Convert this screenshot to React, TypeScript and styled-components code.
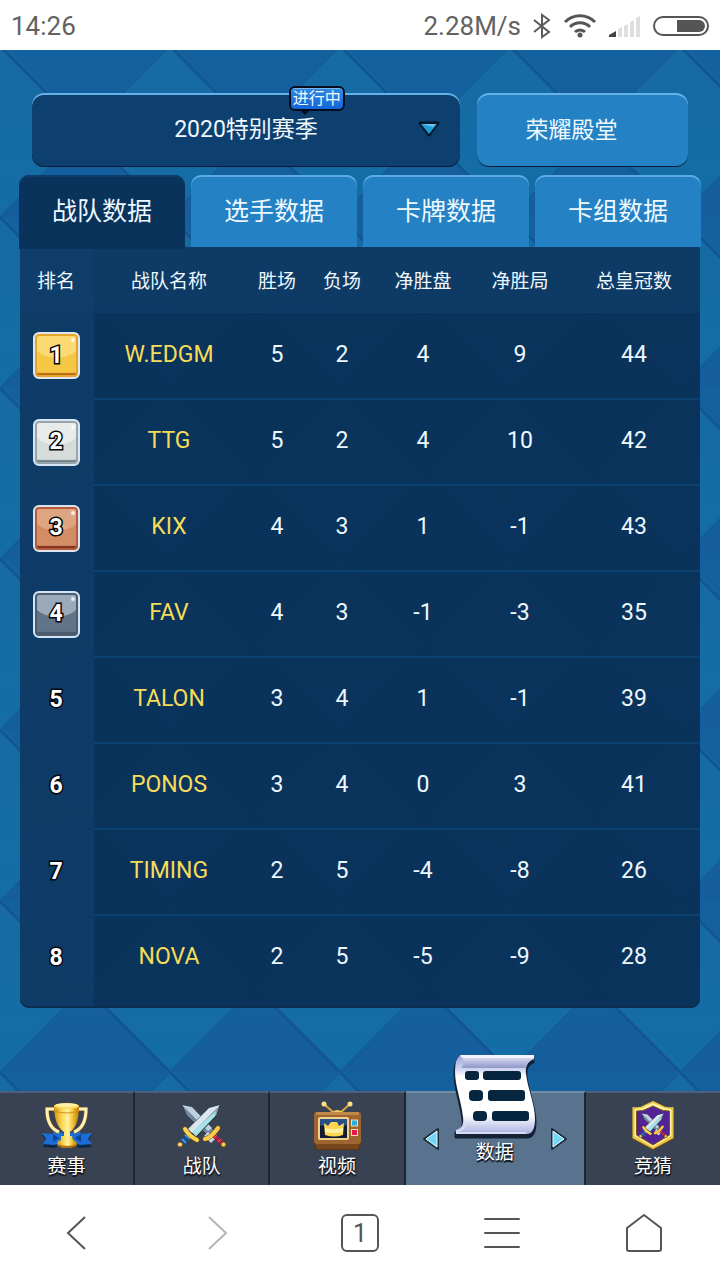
import React from 'react';
import styled, { createGlobalStyle, css } from 'styled-components';

const GlobalStyle = createGlobalStyle`
  *, *::before, *::after { box-sizing: border-box; }
  body {
    margin: 0;
    font-family: Roboto, "Noto Sans CJK SC", sans-serif;
    background: #fff;
  }
  button, select {
    font: inherit;
    color: inherit;
    border: 0;
    padding: 0;
    background: none;
    cursor: pointer;
  }
`;

const Page = styled.div`
  min-height: 100vh;
  display: flex;
  flex-direction: column;
`;

const StatusBar = styled.header`
  height: 50px;
  display: flex;
  align-items: center;
  justify-content: space-between;
  padding: 1px 11px 0;
  font-size: 26px;
  line-height: 32px;
  color: #626262;
  background: #fff;
`;

const StatusIcons = styled.div`
  display: flex;
  align-items: center;
  gap: 12px;
`;

const Main = styled.main`
  position: relative;
  isolation: isolate;
  flex: 1;
  padding: 43px 19px 83px;
  color: #eef8ff;
`;

const Backdrop = styled.svg`
  position: absolute;
  inset: 0;
  width: 100%;
  height: 100%;
  z-index: -1;
`;

const TopRow = styled.div`
  display: grid;
  grid-template-columns: minmax(0, 428fr) minmax(0, 211fr);
  gap: 17px;
  padding: 0 13px;
  margin-bottom: 8px;
`;

const box = css`
  height: 74px;
  border-radius: 12px;
  font-size: 23px;
  box-shadow: inset 0 2px 0 #66b1ea, inset 0 -1px 0 #071b33;
`;

const SeasonField = styled.div`
  position: relative;
`;

const SeasonSelect = styled.select`
  ${box}
  display: block;
  width: 100%;
  appearance: none;
  text-align: center;
  text-align-last: center;
  background: #0e406f;
  padding-bottom: 2px;
`;

const SelectArrow = styled.svg`
  position: absolute;
  right: 19px;
  top: 27px;
  pointer-events: none;
`;

const LiveBadge = styled.span`
  position: absolute;
  left: 60%;
  top: -7px;
  width: 56px;
  height: 25px;
  border: 2px solid #050d1c;
  border-radius: 6px;
  background: linear-gradient(#3389e0, #1265da);
  box-shadow: inset 0 1px 0 #75b8f3;
  font-size: 16px;
  line-height: 21px;
  text-align: center;
  white-space: nowrap;
  &::after {
    content: '';
    position: absolute;
    left: 9px;
    bottom: -6px;
    border: 5px solid transparent;
    border-bottom: 0;
    border-top-color: #050d1c;
  }
`;

const HallButton = styled.button`
  ${box}
  padding: 0 22px 4px 0;
  background: #2381c4;
`;

const Tabs = styled.div`
  display: flex;
  gap: 6px;
  height: 72px;
`;

const Tab = styled.button<{ $active?: boolean }>`
  position: relative;
  z-index: 1;
  flex: 1;
  height: ${(p) => (p.$active ? 74 : 72)}px;
  padding-bottom: ${(p) => (p.$active ? 6 : 4)}px;
  border-radius: 10px 10px 0 0;
  font-size: 25px;
  background: ${(p) => (p.$active ? '#09335b' : '#2381c4')};
  box-shadow: inset 0 2px 0 ${(p) => (p.$active ? '#0d3d69' : '#5cabe6')};
`;

const Panel = styled.section`
  margin: 0 1px;
  padding-bottom: 6px;
  border-radius: 0 0 9px 9px;
  overflow: hidden;
  background: linear-gradient(90deg, rgba(13, 56, 98, 0.92) 74px, rgba(9, 47, 86, 0.92) 74px);
  box-shadow: inset 0 -2px 0 #0a2e50;
`;

const Table = styled.table`
  width: 100%;
  table-layout: fixed;
  border-collapse: collapse;
`;

const Col = styled.col<{ $w?: number }>`
  width: ${(p) => (p.$w ? `${p.$w}px` : 'auto')};
`;

const HeadCell = styled.th`
  height: 66px;
  padding: 4px 0 0;
  font-size: 19px;
  font-weight: 400;
  line-height: 24px;
  white-space: nowrap;
  background: rgba(17, 64, 109, 0.6);
  &:first-child { padding-right: 2px; }
`;

const Cell = styled.td`
  height: 86px;
  padding: 0 0 2px;
  border-bottom: 2px solid #0b4170;
  font-size: 23px;
  line-height: 28px;
  text-align: center;
  tr:last-child & { border-bottom-color: transparent; }
`;

const RankCell = styled(Cell)`
  padding: 0 2px 0 0;
  border-bottom-color: transparent;
`;

const TeamCell = styled(Cell)`
  color: #f6dc59;
`;

type Medal = { border: string; rim: string; top: string; bottom: string; low: string };

const RankBadge = styled.span<{ $medal?: Medal }>`
  display: inline-flex;
  align-items: center;
  justify-content: center;
  width: 47px;
  height: 47px;
  vertical-align: middle;
  border-radius: 6px;
  font-size: 23px;
  font-weight: 700;
  color: #fff;
  -webkit-text-stroke: 3px #05080c;
  paint-order: stroke fill;
  ${(p) =>
    p.$medal &&
    css`
      border: 2px solid ${p.$medal.border};
      background:
        radial-gradient(circle at 38px 6px, rgba(255, 255, 255, 0.8) 1px, transparent 3px),
        radial-gradient(ellipse 24px 16px at 50% 8px, ${p.$medal.top} 96%, transparent),
        ${p.$medal.bottom};
      box-shadow: inset 0 0 0 2px ${p.$medal.rim}, inset 0 -4px 1px ${p.$medal.low};
    `}
`;

const GameNav = styled.nav`
  position: relative;
  display: grid;
  grid-template-columns: repeat(3, minmax(0, 135fr)) minmax(0, 180fr) minmax(0, 134fr);
  height: 94px;
  background: #384253;
`;

const NavItem = styled.button<{ $active?: boolean }>`
  height: 94px;
  display: flex;
  align-items: center;
  justify-content: ${(p) => (p.$active ? 'space-between' : 'center')};
  padding: 0 16px;
  border-top: 2px solid ${(p) => (p.$active ? '#728ba6' : '#4c6177')};
  border-right: 2px solid #1c2532;
  background: ${(p) => (p.$active ? '#59728e' : '#384253')};
  &:last-child { border-right: 0; }
`;

const NavBody = styled.span<{ $active?: boolean }>`
  display: flex;
  flex-direction: column;
  align-items: center;
  justify-content: flex-end;
  gap: ${(p) => (p.$active ? 0 : 4)}px;
  height: 92px;
  padding-bottom: ${(p) => (p.$active ? 20 : 6)}px;
  font-size: 19px;
  line-height: 24px;
  color: #fff;
  text-shadow: 1px 1px 1px #10151d, 0 2px 1px #10151d;
  svg { flex: none; }
`;

const BrowserBar = styled.nav`
  display: flex;
  height: 95px;
  align-items: center;
  justify-content: space-between;
  padding: 0 54px;
  background: #fff;
`;

const BrowserButton = styled.button<{ $muted?: boolean }>`
  width: 44px;
  height: 44px;
  display: flex;
  align-items: center;
  justify-content: center;
  color: ${(p) => (p.$muted ? '#b4b4b4' : '#555')};
`;

const TabCount = styled.span`
  width: 38px;
  height: 38px;
  border: 2px solid #555;
  border-radius: 6px;
  font-size: 25px;
  line-height: 36px;
  text-align: center;
`;

const DiamondBackdrop = () => (
  <Backdrop aria-hidden="true">
    <defs>
      <linearGradient id="lightDiamond" x1="0" y1="0" x2="0" y2="1">
        <stop offset="0" stopColor="#176aa3" />
        <stop offset="1" stopColor="#146da7" />
      </linearGradient>
      <linearGradient id="darkDiamond" x1="0" y1="0" x2="0" y2="1">
        <stop offset="0" stopColor="#14619f" />
        <stop offset="1" stopColor="#155e9e" />
      </linearGradient>
      <pattern id="diamonds" width="170" height="171" patternUnits="userSpaceOnUse" y="-4">
        <rect width="170" height="171" fill="url(#darkDiamond)" />
        <path d="M0 0 85 85.500 0 171ZM170 0 85 85.500 170 171Z" fill="url(#lightDiamond)" />
        <path d="M0 0 170 171" stroke="#10518f" strokeWidth="3" opacity=".75" />
        <path d="M170 0 0 171" stroke="#115694" strokeWidth="2" opacity=".5" />
        <path d="M3 0 170 168" stroke="#1f76b0" strokeWidth="1" opacity=".35" />
      </pattern>
    </defs>
    <rect width="100%" height="100%" fill="url(#diamonds)" />
  </Backdrop>
);

const Bluetooth = () => (
  <svg width="18" height="26" viewBox="0 0 18 26" fill="none" stroke="#5c5c5c" strokeWidth="2">
    <path d="M1 7 16 19 9 24V2l7 5L1 19" />
  </svg>
);

const Wifi = () => (
  <svg width="34" height="24" viewBox="0 0 34 24" fill="none" stroke="#555" strokeWidth="3">
    <path d="M2 8a21 21 0 0 1 30 0M7 13a14 14 0 0 1 20 0M12 18a7 7 0 0 1 10 0" />
    <circle cx="17" cy="21" r="2.500" fill="#555" stroke="none" />
  </svg>
);

const Signal = () => (
  <svg width="32" height="22" viewBox="0 0 32 22">
    <path d="M0 22v-2l7-4v6Z" fill="#444" />
    <path d="M9 22v-8l4-2v10ZM15 22V11l4-2v13ZM21 22V7l4-2v17ZM27 22V3l4-2v21Z" fill="#dedede" />
  </svg>
);

const Battery = () => (
  <svg width="56" height="20" viewBox="0 0 56 20">
    <rect x="1" y="1" width="54" height="18" rx="9" fill="#fff" stroke="#555" strokeWidth="2" />
    <path d="M24 4h22a6 6 0 0 1 0 12H24Z" fill="#555" />
  </svg>
);

const Trophy = () => (
  <svg width="52" height="50" viewBox="40 1100 52 50" aria-hidden="true">
    <defs>
      <linearGradient id="gold">
        <stop offset="0" stopColor="#d08d13" />
        <stop offset=".3" stopColor="#fbd44f" />
        <stop offset=".55" stopColor="#fff3a0" />
        <stop offset=".75" stopColor="#f5c233" />
        <stop offset="1" stopColor="#b9760d" />
      </linearGradient>
    </defs>
    <path d="M41 1133l11 1 1-5 13 6 12-6 2 5 11-1-4 6 4 6-12 1-13-4-13 4-11-1 3-6Z" fill="#0f2747" transform="translate(0 1)" />
    <path d="M41 1132l11 1 1-5 13 6 12-6 2 5 11-1-4 6 4 5-12 1-13-4-13 4-11-1 3-5Z" fill="#1c6ed6" />
    <path d="M52 1133v8l6-4ZM80 1133v8l-6-4Z" fill="#0c469b" />
    <path d="M54 1108h-8c0 13 4 20 12 23M77 1108h8c0 13-4 20-12 23" fill="none" stroke="#8f6316" strokeWidth="4" />
    <path d="M54 1108h-8c0 13 4 20 12 23M77 1108h8c0 13-4 20-12 23" fill="none" stroke="#fff0b5" strokeWidth="3" />
    <path d="M53 1104c0 13 3 22 10 27v7h6v-7c7-5 9-14 9-27Z" fill="url(#gold)" />
    <ellipse cx="65.500" cy="1105" rx="12.500" ry="3" fill="#fbdc67" />
    <ellipse cx="65.500" cy="1104" rx="11" ry="1.800" fill="#fff2a5" />
    <path d="M53 1110q13 4 25 0" stroke="#ce9120" fill="none" />
    <path d="M60 1135h11l1 4q4 1 4 4c0 5-20 5-20 0q0-3 4-4Z" fill="url(#gold)" />
    <path d="M56 1143q10 4 20 0v2q-10 4-20 0Z" fill="#a96b11" />
  </svg>
);

const SwordShapes = () => (
  <g>
    <path d="M182 1104l10 2 22 23-6 6-22-21Z" fill="#71859c" stroke="#26323f" strokeWidth="1" />
    <path d="M182 1104l10 2 20 21-4 3Z" fill="#bfd0df" />
    <path d="M208 1131l7 7-4 4-7-7Z" fill="#c7d7e4" />
    <path d="M213 1134l10 9" stroke="#b31b40" strokeWidth="4" />
    <path d="M214 1137l3-3M218 1141l3-3" stroke="#f25978" />
    <path d="M205 1138q6-1 13-11" stroke="#7c4e0c" strokeWidth="5" fill="none" strokeLinecap="round" />
    <path d="M205 1138q6-1 13-11" stroke="#f9cb47" strokeWidth="4" fill="none" strokeLinecap="round" />
    <circle cx="223.500" cy="1143.500" r="2.500" fill="#f4cb5b" stroke="#7c4e0c" />
    <path d="M220 1104l-11 3-21 21 8 8 21-22Z" fill="#87a0b1" stroke="#26323f" strokeWidth="1" />
    <path d="M220 1104l-11 3-21 21 4 4Z" fill="#d9e6ed" />
    <path d="M216 1110l-24 21 4 4 19-20Z" fill="#a5e3e6" />
    <path d="M190 1133l-9 10" stroke="#164e9b" strokeWidth="5" />
    <path d="M185 1134l5 4M182 1138l4 4" stroke="#49a9eb" strokeWidth="1.500" />
    <path d="M185 1128q4 7 12 11" stroke="#7c4e0c" strokeWidth="5" fill="none" strokeLinecap="round" />
    <path d="M185 1128q4 7 12 11" stroke="#fbd34e" strokeWidth="4" fill="none" strokeLinecap="round" />
    <circle cx="180" cy="1143.500" r="2.500" fill="#f9d877" stroke="#7c4e0c" />
  </g>
);

const Swords = () => (
  <svg width="52" height="50" viewBox="176 1100 52 50" aria-hidden="true">
    <SwordShapes />
  </svg>
);

const Television = () => (
  <svg width="52" height="50" viewBox="311 1101 52 50" aria-hidden="true">
    <path d="M324 1104l10 9M350 1104l-10 9" stroke="#d9a93a" strokeWidth="2" />
    <circle cx="324" cy="1104" r="2.500" fill="#ffe181" />
    <circle cx="350" cy="1104" r="2.500" fill="#ffe181" />
    <path d="M331 1113q6-6 13 0Z" fill="#f5c958" />
    <path d="M317 1112h41q3 0 3 3v29l-2 6h-43l-2-6v-29q0-3 3-3Z" fill="#5a3415" />
    <rect x="314" y="1112" width="47" height="32" rx="3" fill="#9c6532" />
    <rect x="316" y="1112" width="43" height="3" rx="1" fill="#c18848" />
    <path d="M315 1144h45l-2 5h-41Z" fill="#774619" />
    <rect x="319" y="1118" width="29" height="21" rx="1" fill="#111c30" stroke="#f2d28e" strokeWidth="2" />
    <path d="M320 1119h27v6q-14 5-27 0Z" fill="#294f83" />
    <path d="M324 1123l4 3 3-4h6l2 4 5-3-1 12q-9 3-18 0Z" fill="#ffd64f" />
    <path d="M325 1128q9 2 18 0v4q-9 2-18 0Z" fill="#fff09f" />
    <rect x="351.500" y="1120" width="6" height="6" fill="#23aee8" stroke="#f6dcaa" />
    <rect x="351.500" y="1129.500" width="6" height="6" fill="#ef1649" stroke="#f6dcaa" />
  </svg>
);

const Scroll = () => (
  <svg width="88" height="88" viewBox="453 1052 88 88" aria-hidden="true">
    <defs>
      <linearGradient id="paper" x1="0" y1="0" x2="0" y2="1">
        <stop offset="0" stopColor="#9da5d6" />
        <stop offset=".18" stopColor="#cfd4f1" />
        <stop offset=".27" stopColor="#ffffff" />
        <stop offset=".76" stopColor="#ffffff" />
        <stop offset="1" stopColor="#a8b0df" />
      </linearGradient>
      <linearGradient id="curl" x1="0" y1="0" x2="0" y2="1">
        <stop offset="0" stopColor="#e6e9f8" />
        <stop offset="1" stopColor="#8f98c9" />
      </linearGradient>
    </defs>
    <path d="M463 1055h72v4c-6 2-8 7-7 15 2 16 9 30 9 45 0 10-3 15-8 15h-71v-4c6-2 8-6 7-13-2-18-8-30-8-46q0-13 6-16Z" fill="#142235" stroke="#142235" strokeWidth="3" strokeLinejoin="round" transform="translate(0 2)" />
    <path d="M463 1054h73v4c-6 2-9 7-8 15 2 16 9 30 9 45 0 10-3 15-8 15h-71v-4c6-2 8-6 7-13-2-18-8-30-8-46q0-13 6-16Z" fill="url(#paper)" />
    <path d="M463 1054h73v4c-4 1-7 4-8 9h-64q3-8-1-13Z" fill="url(#curl)" />
    <path d="M462 1054h74v3h-72Z" fill="#f3f4fd" />
    <path d="M458 1130q6 0 9-5M458 1132h70" stroke="#d5daf5" strokeWidth="2" fill="none" />
    <g fill="#06263f">
      <rect x="467" y="1070" width="14" height="9" rx="3" />
      <rect x="485" y="1070" width="38" height="9" rx="3" />
      <rect x="471" y="1089" width="14" height="11" rx="4" />
      <rect x="490" y="1089" width="37" height="11" rx="3" />
      <rect x="475" y="1110" width="14" height="10" rx="4" />
      <rect x="494" y="1110" width="37" height="10" rx="3" />
    </g>
  </svg>
);

const Shield = () => (
  <svg width="46" height="50" viewBox="630.500 1102 46 50" aria-hidden="true">
    <path d="M633 1109q8 1 12-3l8.500-4 8.500 4q4 4 12 3v31l-20.500 11-20.500-11Z" fill="#7c570e" />
    <path d="M633 1108q8 1 12-2l8.500-4 8.500 4q4 3 12 2v31l-20.500 11-20.500-11Z" fill="#edc543" />
    <path d="M635 1110q8 0 11-3l7.500-3 7.500 3q3 3 11 3v27l-18.500 11-18.500-11Z" fill="#fff2a0" />
    <path d="M637 1112q7 0 10-2l6.500-3 6.500 3q3 2 10 2v24l-16.500 10-16.500-10Z" fill="#532396" stroke="#7d5418" />
    <g transform="translate(653.500 1126) scale(.58) translate(-201.500 -1124)">
      <SwordShapes />
    </g>
  </svg>
);

const PageArrow = ({ back }: { back?: boolean }) => (
  <svg width="18" height="24" viewBox="0 0 18 24" aria-hidden="true">
    <path
      d={back ? 'M16 2v20L2 12Z' : 'M2 2v20l14-10Z'}
      fill="#6ccdf2"
      stroke="#202b3a"
      strokeWidth="2"
      strokeLinejoin="round"
    />
    <path d={back ? 'M15 4v16L4 12Z' : 'M3 4v16l11-8Z'} fill="#73d6f5" stroke="#e2faff" strokeWidth="1" />
  </svg>
);

const medals: Record<number, Medal> = {
  1: { border: '#e0e6ee', rim: '#e5a52b', top: '#fcd973', bottom: '#f6c645', low: '#b96813' },
  2: { border: '#d7e5f3', rim: '#98a5ad', top: '#e7ebea', bottom: '#d6dcd9', low: '#74828c' },
  3: { border: '#dce3ee', rim: '#b65a3c', top: '#dea583', bottom: '#d38d65', low: '#7d2f1d' },
  4: { border: '#d5e5f5', rim: '#4c5d70', top: '#9aaabb', bottom: '#617488', low: '#47586a' },
};

const columns = ['排名', '战队名称', '胜场', '负场', '净胜盘', '净胜局', '总皇冠数'];

const teams: [string, ...number[]][] = [
  ['W.EDGM', 5, 2, 4, 9, 44],
  ['TTG', 5, 2, 4, 10, 42],
  ['KIX', 4, 3, 1, -1, 43],
  ['FAV', 4, 3, -1, -3, 35],
  ['TALON', 3, 4, 1, -1, 39],
  ['PONOS', 3, 4, 0, 3, 41],
  ['TIMING', 2, 5, -4, -8, 26],
  ['NOVA', 2, 5, -5, -9, 28],
];

const navItems = [
  { label: '赛事', Icon: Trophy },
  { label: '战队', Icon: Swords },
  { label: '视频', Icon: Television },
  { label: '数据', Icon: Scroll, active: true },
  { label: '竞猜', Icon: Shield },
];

export default function App() {
  return (
    <Page>
      <GlobalStyle />
      <StatusBar>
        <span>14:26</span>
        <StatusIcons>
          <span>2.28M/s</span>
          <Bluetooth />
          <Wifi />
          <Signal />
          <Battery />
        </StatusIcons>
      </StatusBar>

      <Main>
        <DiamondBackdrop />
        <TopRow>
          <SeasonField>
            <SeasonSelect aria-label="赛季" defaultValue="2020">
              <option value="2020">2020特别赛季</option>
            </SeasonSelect>
            <SelectArrow width="24" height="20" viewBox="0 0 24 20" aria-hidden="true">
              <path d="M3 3h18l-9 12Z" fill="#1d9bd1" stroke="#06182b" strokeWidth="3" strokeLinejoin="round" />
              <path d="M4 4h16l-8 10Z" fill="#1f9fd4" />
              <path d="M5 4h14l-3 3Z" fill="#6cc4ea" />
            </SelectArrow>
            <LiveBadge>进行中</LiveBadge>
          </SeasonField>
          <HallButton type="button">荣耀殿堂</HallButton>
        </TopRow>

        <Tabs role="tablist">
          {['战队数据', '选手数据', '卡牌数据', '卡组数据'].map((label, i) => (
            <Tab key={label} type="button" role="tab" aria-selected={i === 0} $active={i === 0}>
              {label}
            </Tab>
          ))}
        </Tabs>

        <Panel>
          <Table>
            <colgroup>
              <Col $w={74} />
              <Col />
              <Col $w={66} />
              <Col $w={64} />
              <Col $w={98} />
              <Col $w={96} />
              <Col $w={132} />
            </colgroup>
            <thead>
              <tr>
                {columns.map((name) => (
                  <HeadCell key={name} scope="col">{name}</HeadCell>
                ))}
              </tr>
            </thead>
            <tbody>
              {teams.map(([team, ...stats], i) => (
                <tr key={team}>
                  <RankCell>
                    <RankBadge $medal={medals[i + 1]}>{i + 1}</RankBadge>
                  </RankCell>
                  <TeamCell>{team}</TeamCell>
                  {stats.map((value, j) => (
                    <Cell key={j}>{value}</Cell>
                  ))}
                </tr>
              ))}
            </tbody>
          </Table>
        </Panel>
      </Main>

      <GameNav>
        {navItems.map(({ label, Icon, active }) => (
          <NavItem key={label} type="button" $active={active}>
            {active && <PageArrow back />}
            <NavBody $active={active}>
              <Icon />
              {label}
            </NavBody>
            {active && <PageArrow />}
          </NavItem>
        ))}
      </GameNav>

      <BrowserBar>
        <BrowserButton type="button" aria-label="后退">
          <svg width="22" height="36" viewBox="0 0 22 36" fill="none" stroke="currentColor" strokeWidth="2">
            <path d="M20 2 3 18l17 16" />
          </svg>
        </BrowserButton>
        <BrowserButton type="button" aria-label="前进" $muted>
          <svg width="22" height="36" viewBox="0 0 22 36" fill="none" stroke="currentColor" strokeWidth="2">
            <path d="m2 2 17 16L2 34" />
          </svg>
        </BrowserButton>
        <BrowserButton type="button" aria-label="标签页">
          <TabCount>1</TabCount>
        </BrowserButton>
        <BrowserButton type="button" aria-label="菜单">
          <svg width="38" height="32" viewBox="0 0 38 32" stroke="currentColor" strokeWidth="2" strokeLinecap="round">
            <path d="M2 2h34M2 16h34M2 30h34" />
          </svg>
        </BrowserButton>
        <BrowserButton type="button" aria-label="主页">
          <svg width="38" height="40" viewBox="0 0 38 40" fill="none" stroke="currentColor" strokeWidth="2" strokeLinejoin="round">
            <path d="M2 15 19 2l17 13v21q0 2-2 2H4q-2 0-2-2Z" />
          </svg>
        </BrowserButton>
      </BrowserBar>
    </Page>
  );
}
